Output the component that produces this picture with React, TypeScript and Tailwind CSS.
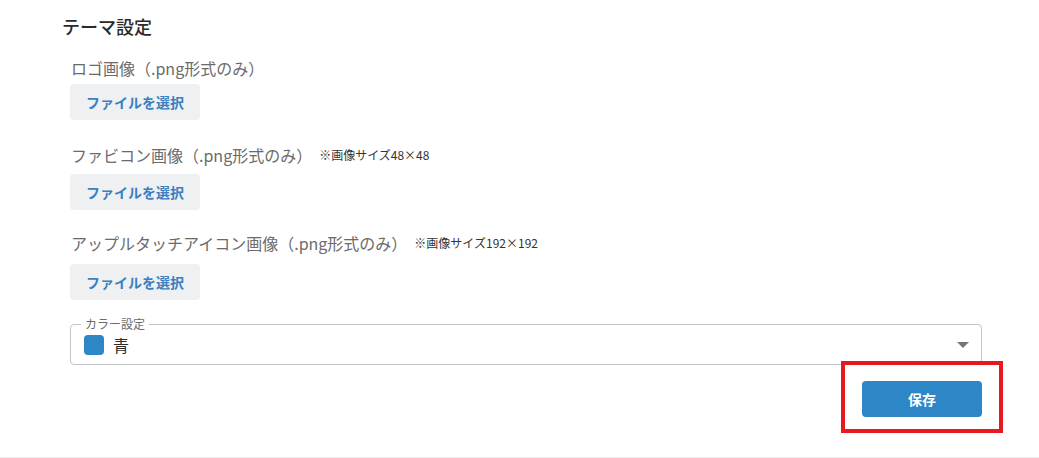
import React from "react";

const FONT = "font-['Noto_Sans_CJK_JP','Noto_Sans',sans-serif]";

type UploadField = {
  label: string;
  note?: string;
  gap: string;
  btnGap: string;
};

const UPLOAD_FIELDS: UploadField[] = [
  { label: "ロゴ画像（.png形式のみ）", gap: "mt-[17px]", btnGap: "mt-[4px]" },
  { label: "ファビコン画像（.png形式のみ）", note: "※画像サイズ48×48", gap: "mt-[23px]", btnGap: "mt-[7px]" },
  { label: "アップルタッチアイコン画像（.png形式のみ）", note: "※画像サイズ192×192", gap: "mt-[21px]", btnGap: "mt-[9px]" },
];

const FileButton: React.FC = () => (
  <button
    type="button"
    className="h-9 w-[130px] rounded-[4px] bg-[#eef0f2] text-sm font-bold text-[#3a7fc0]"
  >
    ファイルを選択
  </button>
);

export default function App() {
  return (
    <div className={`relative h-[458px] w-[1039px] overflow-hidden bg-white ${FONT}`}>
      <div className="border-b border-[#ececec] h-[458px] pl-[62px] pt-[13px]">
        <h2 className="text-[18px] leading-[26px] font-medium text-[#2b2b2b]">テーマ設定</h2>

        <div className="pl-2">
          {UPLOAD_FIELDS.map((field) => (
            <div key={field.label} className={field.gap}>
              <div className="flex items-center h-6 pl-[1px]">
                <span className="text-base leading-6 text-[#6b6b6b]">{field.label}</span>
                {field.note && (
                  <span className="ml-[7px] text-xs text-[#333]">{field.note}</span>
                )}
              </div>
              <div className={field.btnGap}>
                <FileButton />
              </div>
            </div>
          ))}

          {/* color select, outlined */}
          <div className="relative mt-6 h-[41px] w-[912px] rounded-[4px] border border-[#c4c4c4]">
            <span className="absolute -top-[8px] left-[10px] bg-white px-[4px] text-xs leading-[14px] text-[#6b6b6b]">
              カラー設定
            </span>
            <div className="flex h-full items-center pl-[13px]">
              <span className="h-5 w-5 rounded-[4px] bg-[#2d86c6]" />
              <span className="ml-[9px] text-base text-[#2b2b2b]">青</span>
            </div>
            <svg
              className="absolute right-[12px] top-[17px]"
              width="12"
              height="6"
              viewBox="0 0 12 6"
            >
              <path d="M0 0h12L6 6z" fill="#757575" />
            </svg>
          </div>

          <div className="mt-4 flex w-[912px] justify-end">
            <button
              type="button"
              className="h-9 w-[120px] rounded-[4px] bg-[#2d86c6] text-sm font-bold text-white"
            >
              保存
            </button>
          </div>
        </div>
      </div>

      {/* highlight frame around save */}
      <div className="absolute left-[841px] top-[361px] h-[72px] w-[162px] border-4 border-[#e8191e]" />
    </div>
  );
}
